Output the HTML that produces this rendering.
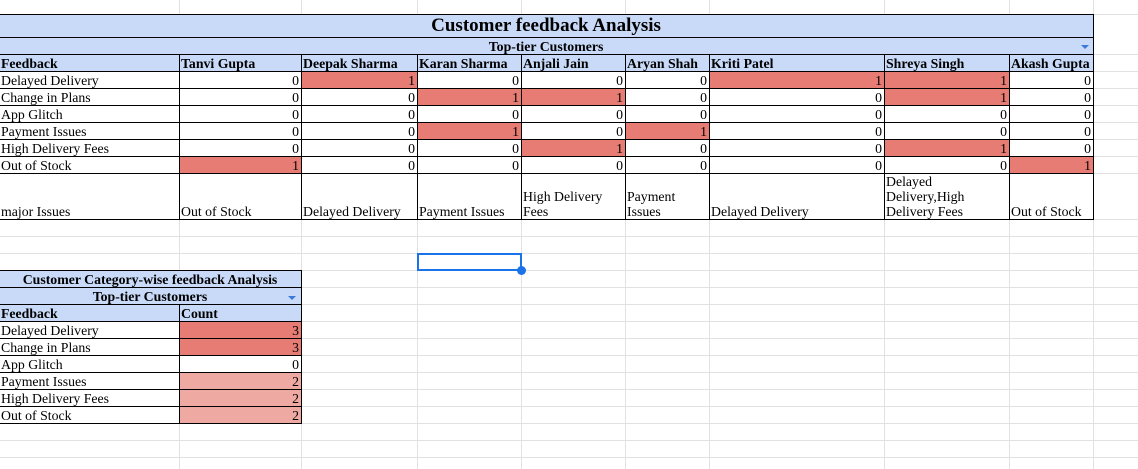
<!DOCTYPE html>
<html><head><meta charset="utf-8"><style>
body{margin:0;width:1138px;height:469px;background:#fff;position:relative;overflow:hidden;font-family:"Liberation Serif","DejaVu Serif",serif;font-size:13.8px;color:#000}
.gv{position:absolute;top:0;height:469px;width:1px;background:#e1e1e1}
.gh{position:absolute;left:0;width:1138px;height:1px;background:#e1e1e1}
table{position:absolute;border-collapse:collapse;table-layout:fixed;background:#fff}
td{border:1px solid #000;padding:0 2px 0 1px;line-height:15px;white-space:nowrap;overflow:hidden;height:16px;box-sizing:border-box}
.b{background:#c9daf8;font-weight:bold}
.c{text-align:center}
.n{text-align:right}
.r{background:#e67c73}
.p{background:#efa9a3}
.big td.m{vertical-align:bottom;white-space:normal;height:46px;line-height:15px}
.arr{position:absolute;width:0;height:0;border-left:4px solid transparent;border-right:4px solid transparent;border-top:4px solid #3c78d8}
</style></head><body>
<div class="gv" style="left:179px"></div><div class="gv" style="left:301px"></div><div class="gv" style="left:417px"></div><div class="gv" style="left:521px"></div><div class="gv" style="left:625px"></div><div class="gv" style="left:709px"></div><div class="gv" style="left:884px"></div><div class="gv" style="left:1009px"></div><div class="gv" style="left:1093px"></div>
<div class="gh" style="top:14px"></div><div class="gh" style="top:219px"></div><div class="gh" style="top:236px"></div><div class="gh" style="top:253px"></div><div class="gh" style="top:270px"></div><div class="gh" style="top:287px"></div><div class="gh" style="top:304px"></div><div class="gh" style="top:321px"></div><div class="gh" style="top:338px"></div><div class="gh" style="top:355px"></div><div class="gh" style="top:372px"></div><div class="gh" style="top:389px"></div><div class="gh" style="top:406px"></div><div class="gh" style="top:423px"></div><div class="gh" style="top:440px"></div><div class="gh" style="top:457px"></div>
<div class="gh" style="top:71px"></div><div class="gh" style="top:88px"></div><div class="gh" style="top:105px"></div><div class="gh" style="top:122px"></div><div class="gh" style="top:139px"></div><div class="gh" style="top:156px"></div><div class="gh" style="top:173px"></div><div class="gh" style="top:54px"></div>

<table class="big" style="left:-1px;top:14px;width:1094px">
<colgroup><col style="width:180px"><col style="width:122px"><col style="width:116px"><col style="width:104px"><col style="width:104px"><col style="width:84px"><col style="width:175px"><col style="width:125px"><col style="width:84px"></colgroup>
<tr><td colspan="9" class="b c" style="height:23px;font-size:19px;line-height:20px">Customer feedback Analysis</td></tr>
<tr><td colspan="9" class="b c" style="height:17px">Top-tier Customers</td></tr>
<tr class="b"><td style="height:17px">Feedback</td><td>Tanvi Gupta</td><td>Deepak Sharma</td><td>Karan Sharma</td><td>Anjali Jain</td><td>Aryan Shah</td><td>Kriti Patel</td><td>Shreya Singh</td><td>Akash Gupta</td></tr>
<tr><td style="height:17px">Delayed Delivery</td><td class="n">0</td><td class="n r">1</td><td class="n">0</td><td class="n">0</td><td class="n">0</td><td class="n r">1</td><td class="n r">1</td><td class="n">0</td></tr>
<tr><td style="height:17px">Change in Plans</td><td class="n">0</td><td class="n">0</td><td class="n r">1</td><td class="n r">1</td><td class="n">0</td><td class="n">0</td><td class="n r">1</td><td class="n">0</td></tr>
<tr><td style="height:17px">App Glitch</td><td class="n">0</td><td class="n">0</td><td class="n">0</td><td class="n">0</td><td class="n">0</td><td class="n">0</td><td class="n">0</td><td class="n">0</td></tr>
<tr><td style="height:17px">Payment Issues</td><td class="n">0</td><td class="n">0</td><td class="n r">1</td><td class="n">0</td><td class="n r">1</td><td class="n">0</td><td class="n">0</td><td class="n">0</td></tr>
<tr><td style="height:17px">High Delivery Fees</td><td class="n">0</td><td class="n">0</td><td class="n">0</td><td class="n r">1</td><td class="n">0</td><td class="n">0</td><td class="n r">1</td><td class="n">0</td></tr>
<tr><td style="height:17px">Out of Stock</td><td class="n r">1</td><td class="n">0</td><td class="n">0</td><td class="n">0</td><td class="n">0</td><td class="n">0</td><td class="n">0</td><td class="n r">1</td></tr>
<tr><td class="m">major Issues</td><td class="m">Out of Stock</td><td class="m">Delayed Delivery</td><td class="m">Payment Issues</td><td class="m">High Delivery Fees</td><td class="m">Payment Issues</td><td class="m">Delayed Delivery</td><td class="m">Delayed Delivery,High Delivery Fees</td><td class="m">Out of Stock</td></tr>
</table>
<div class="arr" style="left:1081px;top:45px"></div>

<table style="left:-1px;top:270px;width:302px">
<colgroup><col style="width:180px"><col style="width:122px"></colgroup>
<tr><td colspan="2" class="b c" style="height:17px">Customer Category-wise feedback Analysis</td></tr>
<tr><td colspan="2" class="b c" style="height:17px">Top-tier Customers</td></tr>
<tr class="b"><td style="height:17px">Feedback</td><td>Count</td></tr>
<tr><td style="height:17px">Delayed Delivery</td><td class="n r">3</td></tr>
<tr><td style="height:17px">Change in Plans</td><td class="n r">3</td></tr>
<tr><td style="height:17px">App Glitch</td><td class="n">0</td></tr>
<tr><td style="height:17px">Payment Issues</td><td class="n p">2</td></tr>
<tr><td style="height:17px">High Delivery Fees</td><td class="n p">2</td></tr>
<tr><td style="height:17px">Out of Stock</td><td class="n p">2</td></tr>
</table>
<div class="arr" style="left:288px;top:296px"></div>

<div style="position:absolute;left:417px;top:253px;width:101px;height:14px;border:2px solid #1a73e8"></div>
<div style="position:absolute;left:517px;top:266px;width:9px;height:9px;border-radius:50%;background:#1a73e8"></div>
</body></html>
